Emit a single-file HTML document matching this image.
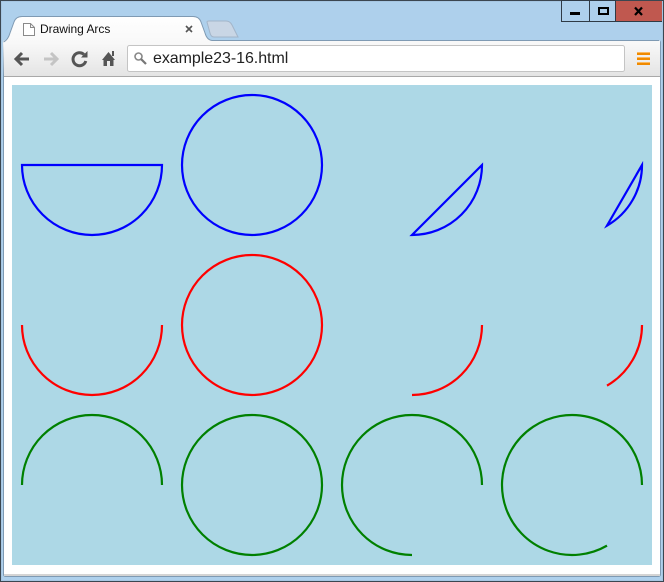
<!DOCTYPE html>
<html><head><meta charset="utf-8"><title>Drawing Arcs</title>
<style>
html,body{margin:0;padding:0;background:#aed0ec}
body{width:664px;height:582px;overflow:hidden;position:relative;font-family:"Liberation Sans",sans-serif}
.abs{position:absolute}
#t{left:40px;top:22px;font-size:12px;line-height:14px;color:#111;letter-spacing:-0.03px}
#u{left:153px;top:49px;font-size:16px;line-height:19px;color:#222;letter-spacing:-0.05px}
</style></head><body>
<svg class="abs" style="left:0;top:0" width="664" height="582" viewBox="0 0 664 582">
<defs>
<linearGradient id="g" x1="0" y1="0" x2="0" y2="1"><stop offset="0" stop-color="#fff"/><stop offset="0.45" stop-color="#f8f8f8"/><stop offset="1" stop-color="#e4e4e4"/></linearGradient>
</defs>
<rect width="664" height="582" fill="#aed0ec"/>
<rect x="0.5" y="0.5" width="663" height="581" fill="none" stroke="#3b4650"/>
<rect x="1.5" y="1.5" width="661" height="579" fill="none" stroke="#a6c6e2"/>
<!-- chrome body -->
<rect x="3.5" y="40.5" width="657" height="536" rx="2" fill="#fff" stroke="#7f9ab3"/>
<rect x="4" y="41" width="656" height="35" fill="url(#g)"/>
<rect x="4" y="76" width="656" height="1" fill="#a9a9a9"/>
<rect x="4" y="574" width="656" height="2" fill="#d4d4d4"/>
<!-- inactive tab -->
<path d="M207 22 Q207 21 209 21 L226 21 Q230 21 232 25 L238 37 L214 37 Q211 37 210 33 Z" fill="#c9d6e5" stroke="#a3b5c9"/>
<!-- active tab -->
<path d="M3 41 Q8 40 10 33 L14 22 Q16 16.500 22 16.500 L193 16.500 Q199 16.500 201 22 L205 33 Q207 40 212 40.500 L660 40.500 L660 76 L4 76 Z" fill="url(#g)"/>
<path d="M3.500 42 Q8 40 10 33 L14 22 Q16 16.500 22 16.500 L193 16.500 Q199 16.500 201 22 L205 33 Q207 40 212 40.500 L659 40.500" fill="none" stroke="#7f9ab3"/>
<!-- page icon -->
<path d="M23.500 23.500 H30.500 L34.500 27.500 V35.500 H23.500 Z M30.500 23.500 V27.500 H34.500" fill="#fff" stroke="#8a8a8a"/>
<!-- close x -->
<path d="M186 26 L192 32 M192 26 L186 32" stroke="#555" stroke-width="1.600" fill="none"/>
<!-- back -->
<path d="M29 59 H17 M22 53 L16 59 L22 65" fill="none" stroke="#555" stroke-width="3"/>
<!-- forward -->
<path d="M44 59 H56 M51 53 L57 59 L51 65" fill="none" stroke="#c4c4c4" stroke-width="3"/>
<!-- reload -->
<path d="M84 54.500 A6.500 6.500 0 1 0 85.800 61" fill="none" stroke="#555" stroke-width="3"/>
<path d="M81 57.500 H87.500 V51 Z" fill="#555"/>
<!-- home -->
<path d="M102 60 L108.500 52 L115 60 L113.500 60 V66 H110 V61 H107 V66 H103.500 V60 Z" fill="#555"/>
<rect x="112" y="51" width="2" height="5" fill="#555"/>
<!-- omnibox -->
<rect x="127.500" y="45.500" width="497" height="26" rx="2" fill="#fff" stroke="#c4c4c4"/>
<!-- search icon -->
<circle cx="138.500" cy="56.500" r="3.500" fill="none" stroke="#888" stroke-width="1.600"/>
<path d="M141 59 L146 64" stroke="#777" stroke-width="2.200" fill="none"/>
<!-- menu -->
<g fill="#f08a00"><rect x="637" y="52" width="13" height="3"/><rect x="637" y="57" width="13" height="3"/><rect x="637" y="62" width="13" height="3"/></g>
<g fill="#fbb960"><rect x="637" y="52" width="13" height="1"/><rect x="637" y="57" width="13" height="1"/><rect x="637" y="62" width="13" height="1"/></g>
<!-- window controls -->
<rect x="561.500" y="0.500" width="28" height="21" fill="#aed0ec" stroke="#2f3a45"/>
<rect x="589.500" y="0.500" width="26" height="21" fill="#aed0ec" stroke="#2f3a45"/>
<rect x="616" y="1" width="46" height="20.500" fill="#c0584f"/>
<path d="M616 21.500 H662" stroke="#2f3a45"/>
<rect x="570" y="12" width="10" height="3" fill="#000"/>
<rect x="599" y="8" width="9" height="6" fill="none" stroke="#000" stroke-width="2"/>
<path d="M635 7.500 L642 15 M642 7.500 L635 15" stroke="#000" stroke-width="2.200" fill="none"/>
<!-- canvas -->
<rect x="12" y="85" width="640" height="480" fill="#add8e6"/>
<g fill="none" stroke-width="2.200">
<g stroke="#0000ff">
<path d="M162 165 A70 70 0 0 1 22 165 Z"/>
<circle cx="252" cy="165" r="70"/>
<path d="M482 165 A70 70 0 0 1 412 235 Z"/>
<path d="M642 165 A70 70 0 0 1 607 225.620 Z"/>
</g>
<g stroke="#ff0000">
<path d="M162 325 A70 70 0 0 1 22 325"/>
<circle cx="252" cy="325" r="70"/>
<path d="M482 325 A70 70 0 0 1 412 395"/>
<path d="M642 325 A70 70 0 0 1 607 385.620"/>
</g>
<g stroke="#008000">
<path d="M162 485 A70 70 0 0 0 22 485"/>
<circle cx="252" cy="485" r="70"/>
<path d="M482 485 A70 70 0 1 0 412 555"/>
<path d="M642 485 A70 70 0 1 0 607 545.620"/>
</g>
</g>
</svg>
<div class="abs" id="t">Drawing Arcs</div>
<div class="abs" id="u">example23-16.html</div>
</body></html>
